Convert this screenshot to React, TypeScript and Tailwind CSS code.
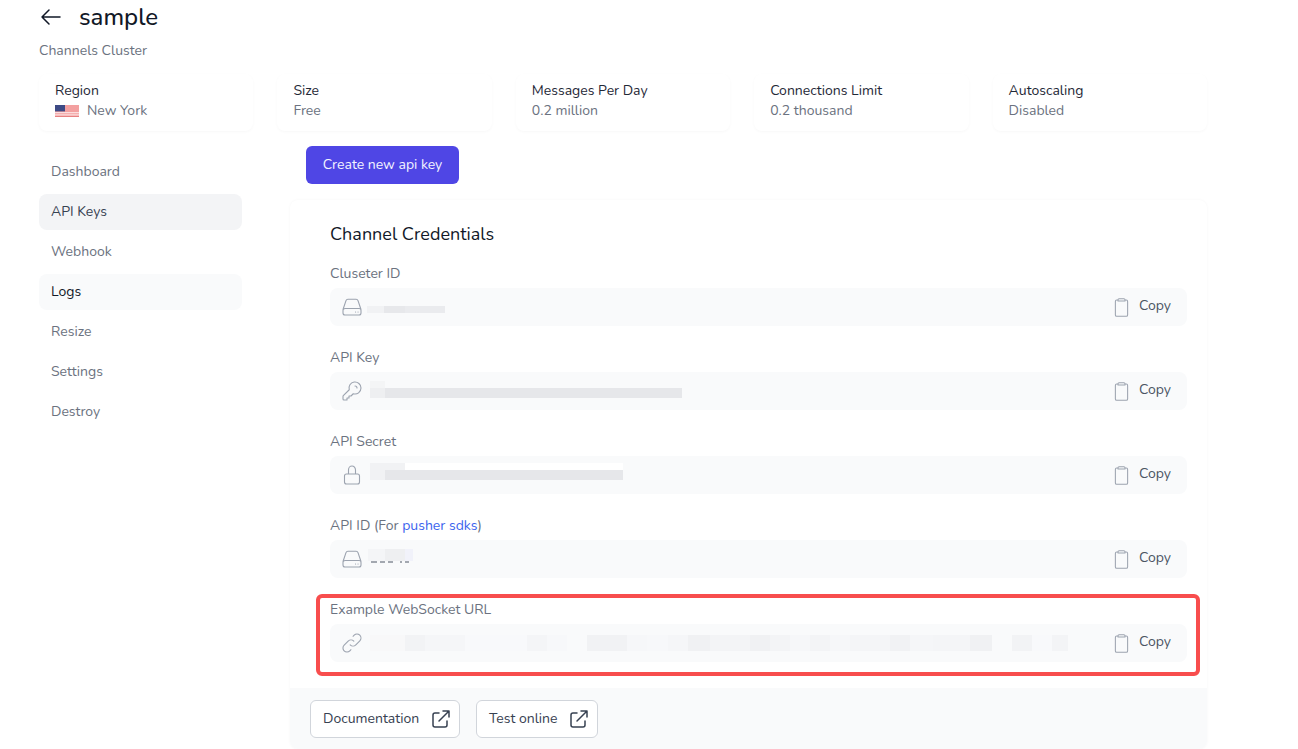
import React from "react";

type Seg = [number, string];
type Row = { h: string; segs: Seg[] };

const Ico = ({ d, className }: { d: string; className: string }) => (
  <svg viewBox="0 0 24 24" fill="none" stroke="currentColor" strokeLinecap="round" strokeLinejoin="round" className={className}>
    <path d={d} />
  </svg>
);

const DRIVE = "M3 14.5 L6 5.6 A2 2 0 0 1 7.9 4.2 H16.1 A2 2 0 0 1 18 5.6 L21 14.5 M5 13.5 H19 A2 2 0 0 1 21 15.5 V18 A2 2 0 0 1 19 20 H5 A2 2 0 0 1 3 18 V15.5 A2 2 0 0 1 5 13.5 Z M15.5 17 H15.6 M18 17 H18.1";
const KEY = "M15 7a2 2 0 012 2m4 0a6 6 0 01-7.743 5.743L11 17H9v2H7v2H4a1 1 0 01-1-1v-2.586a1 1 0 01.293-.707l5.964-5.964A6 6 0 1121 9z";
const LOCK = "M6.5 21h11a2 2 0 002-2v-6a2 2 0 00-2-2h-11a2 2 0 00-2 2v6a2 2 0 002 2zm9-10V7a3.5 4 0 00-7 0v4h7z";
const LINK = "M13.828 10.172a4 4 0 00-5.656 0l-4 4a4 4 0 105.656 5.656l1.102-1.101m-.758-4.899a4 4 0 005.656 0l4-4a4 4 0 00-5.656-5.656l-1.1 1.1";
const CLIP = "M8 3.5H6.5A1.5 1.5 0 0 0 5 5V20.5A1.5 1.5 0 0 0 6.5 22H17.5A1.5 1.5 0 0 0 19 20.5V5A1.5 1.5 0 0 0 17.5 3.5H16 M8 4.5V3.2A1.2 1.2 0 0 1 9.2 2H14.8A1.2 1.2 0 0 1 16 3.2V4.5Z";
const EXT = "M10 6H6a2 2 0 00-2 2v10a2 2 0 002 2h10a2 2 0 002-2v-4M14 4h6m0 0v6m0-6L10 14";
const ARROW = "M10 19l-7-7m0 0l7-7m-7 7h18";

const Redact = ({ rows, className }: { rows: Row[]; className: string }) => (
  <div className={className}>
    {rows.map((r, i) => (
      <div key={i} className={`flex ${r.h}`}>
        {r.segs.map(([w, c], j) => (
          <div key={j} style={{ width: w, backgroundColor: c }} />
        ))}
      </div>
    ))}
  </div>
);

const Field = ({ label, icon, children }: { label: React.ReactNode; icon: string; children?: React.ReactNode }) => (
  <div>
    <div className="h-5 text-[14px] leading-5 text-[#6b7280] mb-1">{label}</div>
    <div className="flex h-[38px] rounded-lg bg-[#f9fafb]">
      <div className="flex flex-1 items-center pl-[10px]">
        <Ico d={icon} className="w-6 h-6 shrink-0 text-[#9ca3af] stroke-[1.1]" />
        {children}
      </div>
      <div className="flex w-[91px] items-center pl-[15px]">
        <Ico d={CLIP} className="w-[21px] h-[21px] text-[#9ca3af] stroke-[1.2]" />
        <span className="ml-[7px] -mt-[3px] text-[14px] leading-5 text-[#4b5563]">Copy</span>
      </div>
    </div>
  </div>
);

const Stat = ({ title, children }: { title: string; children: React.ReactNode }) => (
  <div className="h-[57px] rounded-lg bg-white pl-4 pt-[7px] shadow-[0_1px_3px_rgba(0,0,0,0.03)] text-[14px] leading-5">
    <div className="text-[#1f2937]">{title}</div>
    <div className="text-[#6b7280] flex items-center">{children}</div>
  </div>
);

const NAV = ["Dashboard", "API Keys", "Webhook", "Logs", "Resize", "Settings", "Destroy"];
const navClass: Record<string, string> = {
  "API Keys": "bg-[#f3f4f6] text-[#374151]",
  Logs: "bg-[#f9fafb] text-[#111827]",
};

const URL_SEGS: Seg[] = [
  [35, "#f8f8f9"], [20, "#f2f3f5"], [40, "#f5f6f8"], [62, "#f8f9fb"], [20, "#f4f5f7"], [20, "#f7f8fa"], [20, "#f9fafb"],
  [40, "#f1f2f4"], [20, "#f6f7f9"], [21, "#f7f8fa"], [20, "#f5f6f8"], [22, "#f0f1f3"], [40, "#f3f4f6"], [20, "#f0f1f3"],
  [20, "#f3f4f6"], [20, "#f6f7f9"], [20, "#f3f4f6"], [20, "#f6f7f9"], [40, "#f4f5f7"], [20, "#f1f2f4"], [23, "#f5f6f8"],
  [37, "#f4f5f7"], [22, "#f0f1f3"], [20, "#f9fafb"], [20, "#f2f3f5"], [20, "#f8f9fb"], [16, "#f3f4f6"],
];

const GAP = "#f9fafb";
const DASH = "#a3a8b0";

export default function App() {
  return (
    <div className="w-[1298px] h-[749px] overflow-hidden bg-white px-[39px] pt-px font-['Nunito','Lato','Open_Sans',sans-serif]">
      <div className="flex h-8 items-center">
        <Ico d={ARROW} className="w-6 h-6 text-[#111827] stroke-[1.5]" />
        <h1 className="ml-4 text-[24px] leading-8 font-medium text-[#111827]">sample</h1>
      </div>
      <div className="mt-2 h-5 text-[14px] leading-5 text-[#6b7280]">Channels Cluster</div>
      <div className="mt-[13px] grid grid-cols-5 gap-6 w-[1168px]">
        <Stat title="Region">
          <svg viewBox="0 0 24 12" className="w-6 h-3 mr-2">
            <rect width="24" height="12" fill="#f3a0a0" />
            <rect y="7.2" width="24" height="1" fill="#fff" opacity="0.8" />
            <rect y="9.4" width="24" height="1" fill="#fff" opacity="0.8" />
            <rect y="11.2" width="24" height="0.8" fill="#e57a7a" />
            <rect width="10" height="6.4" fill="#3d4a85" />
          </svg>
          New York
        </Stat>
        <Stat title="Size">Free</Stat>
        <Stat title="Messages Per Day">0.2 million</Stat>
        <Stat title="Connections Limit">0.2 thousand</Stat>
        <Stat title="Autoscaling">Disabled</Stat>
      </div>
      <div className="mt-[15px] flex gap-12">
        <nav className="w-[203px] pt-2 flex flex-col gap-1">
          {NAV.map((n) => (
            <div key={n} className={`h-9 rounded-lg px-3 text-[14px] leading-9 ${navClass[n] ?? "text-[#6b7280]"}`}>{n}</div>
          ))}
        </nav>
        <main className="w-[917px]">
          <button className="ml-4 h-[38px] w-[153px] rounded-md bg-[#4f46e5] pb-[2px] text-[14px] text-[#f3f4ff]">Create new api key</button>
          <section className="relative mt-4 h-[549px] rounded-lg bg-white shadow-[0_0_3px_rgba(0,0,0,0.04)] overflow-hidden">
            <div className="px-10 pt-5">
              <h2 className="text-[18px] leading-7 text-[#111827]">Channel Credentials</h2>
              <div className="mt-4 w-[857px] flex flex-col gap-[22px]">
                <Field label="Cluseter ID" icon={DRIVE}>
                  <Redact className="ml-[3px] mt-[5px]" rows={[{ h: "h-[7px]", segs: [[17, "#f1f2f4"], [21, "#e7e8eb"], [40, "#eaebee"]] }]} />
                </Field>
                <Field label="API Key" icon={KEY}>
                  <Redact className="ml-[6px] -mt-[3px]" rows={[
                    { h: "h-[7px]", segs: [[15, "#f4f5f6"]] },
                    { h: "h-[10px]", segs: [[15, "#eeeff1"], [297, "#e6e7ea"]] },
                  ]} />
                </Field>
                <Field label="API Secret" icon={LOCK}>
                  <Redact className="ml-[6px] -mt-[7px]" rows={[
                    { h: "h-[7px]", segs: [[35, "#f1f2f4"], [218, "#ffffff"]] },
                    { h: "h-[10px]", segs: [[15, "#f1f2f4"], [238, "#e6e7ea"]] },
                  ]} />
                </Field>
                <Field label={<>API ID (For <span className="text-[#3b63ee]">pusher sdks</span>)</>} icon={DRIVE}>
                  <Redact className="ml-1 -mt-[6px]" rows={[
                    { h: "h-3", segs: [[17, "#f4f5f7"], [20, "#eeeff1"], [8, "#f1f2fa"]] },
                    { h: "h-[2px]", segs: [[3, GAP], [6, DASH], [3, GAP], [5, DASH], [3, GAP], [5, DASH], [7, GAP], [2, DASH], [3, GAP], [4, DASH]] },
                  ]} />
                </Field>
                <Field label="Example WebSocket URL" icon={LINK}>
                  <div className="ml-[6px] flex h-4">
                    {URL_SEGS.map(([w, c], i) => (
                      <div key={i} style={{ width: w, backgroundColor: c }} />
                    ))}
                  </div>
                </Field>
              </div>
            </div>
            <div className="mt-[26px] h-[80px] bg-[#f9fafb] pl-5 pt-3 flex items-start gap-4">
              <a className="flex h-[38px] w-[150px] items-center justify-between rounded-md border border-[#d1d5db] bg-white pl-3 pr-[6px] text-[14px] text-[#374151]">
                <span className="-mt-[2px]">Documentation</span>
                <Ico d={EXT} className="w-6 h-6 text-[#374151] stroke-[1.5]" />
              </a>
              <a className="flex h-[38px] w-[122px] items-center justify-between rounded-md border border-[#d1d5db] bg-white pl-3 pr-[6px] text-[14px] text-[#374151]">
                <span className="-mt-[2px]">Test online</span>
                <Ico d={EXT} className="w-6 h-6 text-[#374151] stroke-[1.5]" />
              </a>
            </div>
            <div className="absolute left-[26px] top-[394px] h-[82px] w-[884px] rounded-md border-4 border-[#f84d4d]" />
          </section>
        </main>
      </div>
    </div>
  );
}
